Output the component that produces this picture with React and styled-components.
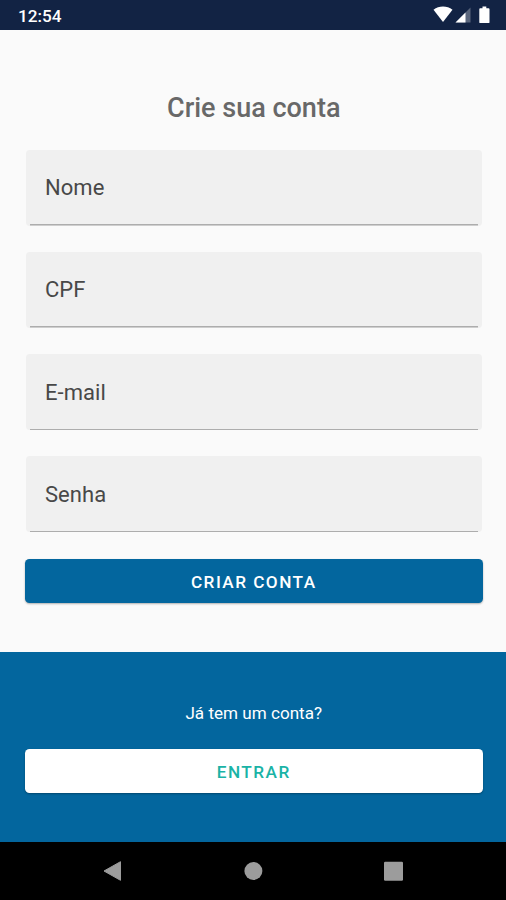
import React, { useState } from "react";
import styled, { createGlobalStyle } from "styled-components";

const GlobalStyle = createGlobalStyle`
  * {
    box-sizing: border-box;
  }
  body {
    margin: 0;
    font-family: Roboto, sans-serif;
  }
`;

const Screen = styled.div`
  display: flex;
  flex-direction: column;
  height: 100vh;
  background: #fafafa;
`;

const StatusBar = styled.header`
  display: flex;
  justify-content: space-between;
  height: 29.5px;
  flex-shrink: 0;
  padding: 0 13px 0 18px;
  color: #fff;
  background: #122344;
`;

const Clock = styled.span`
  font-size: 17.2px;
  font-weight: 500;
  line-height: 32px;
`;

const Form = styled.form`
  display: flex;
  flex-direction: column;
  flex: 1;
  padding: 62px 23.5px 0 25px;
`;

const Title = styled.h1`
  margin: 0 0 26px;
  font-size: 27px;
  font-weight: 500;
  line-height: 32px;
  color: #686868;
  text-align: center;
`;

const Field = styled.label`
  display: flex;
  align-items: center;
  height: 76px;
  margin: 0 0.5px 26.3px 1px;
  padding: 0 19px;
  border-radius: 4px;
  background: linear-gradient(#adadad, #adadad) center 74.5px / calc(100% - 8px)
      1.5px no-repeat,
    #f0f0f0;
`;

const Label = styled.span`
  font-size: 22px;
  letter-spacing: 0.05px;
  color: #484848;
`;

const Input = styled.input`
  flex: 1;
  min-width: 0;
  margin-left: 8px;
  border: none;
  outline: none;
  font: inherit;
  font-size: 21px;
  background: transparent;
`;

const Button = styled.button`
  width: 100%;
  height: 44px;
  flex-shrink: 0;
  padding: 2px 0 0;
  border: none;
  border-radius: 4.5px;
  font-family: inherit;
  font-size: 17.2px;
  font-weight: 500;
  letter-spacing: 1.45px;
  text-transform: uppercase;
  cursor: pointer;
  color: ${({ $light }) => ($light ? "#1ab3a6" : "#fff")};
  background: ${({ $light }) => ($light ? "#fff" : "#03669e")};
  box-shadow: 0 1px 2px rgba(0, 0, 0, 0.3);
`;

const Footer = styled.footer`
  display: flex;
  flex-direction: column;
  align-items: center;
  height: 189.5px;
  flex-shrink: 0;
  padding: 49px 23.5px 0 25px;
  color: #fff;
  background: #03669e;
`;

const Question = styled.p`
  margin: 0 0 24px;
  font-size: 17.1px;
  line-height: 24px;
`;

const NavBar = styled.nav`
  height: 58.4px;
  flex-shrink: 0;
  background: #000;
`;

const fields = [
  { name: "nome", label: "Nome", type: "text" },
  { name: "cpf", label: "CPF", type: "text" },
  { name: "email", label: "E-mail", type: "email" },
  { name: "senha", label: "Senha", type: "password" },
];

const StatusIcons = () => (
  <svg width="60" height="29" viewBox="0 0 60 29" fill="#fff">
    <path d="M.5 9.8C3.4 7.600 6.500 6.600 10 6.600s6.600 1 9.500 3.200L10 22z" />
    <path d="M22.500 22.500 37.500 7.500v15z" opacity=".3" />
    <path d="M22.500 22.500 32.500 12.500v10z" />
    <path d="M47.200 8.300h2.300V6.600h3.800v1.700h2.300q.9 0 .9.900v13q0 .9-.9.900h-8.400q-.9 0-.9-.9v-13q0-.9.900-.9z" />
  </svg>
);

const NavIcons = () => (
  <svg width="506" height="58" viewBox="0 0 506 58" fill="#9c9c9c">
    <path
      d="M104 29 120.500 19.700v18.600z"
      stroke="#9c9c9c"
      strokeWidth="1"
      strokeLinejoin="round"
    />
    <circle cx="253.400" cy="29" r="9" />
    <rect x="384" y="19.700" width="19" height="19" rx="1.200" />
  </svg>
);

const App = () => {
  const [values, setValues] = useState({});

  return (
    <Screen>
      <GlobalStyle />
      <StatusBar>
        <Clock>12:54</Clock>
        <StatusIcons />
      </StatusBar>

      <Form onSubmit={(event) => event.preventDefault()}>
        <Title>Crie sua conta</Title>

        {fields.map(({ name, label, type }) => (
          <Field key={name}>
            <Label>{label}</Label>
            <Input
              name={name}
              type={type}
              value={values[name] || ""}
              onChange={(event) =>
                setValues({ ...values, [name]: event.target.value })
              }
            />
          </Field>
        ))}

        <Button type="submit">Criar conta</Button>
      </Form>

      <Footer>
        <Question>Já tem um conta?</Question>
        <Button type="button" $light>
          Entrar
        </Button>
      </Footer>

      <NavBar>
        <NavIcons />
      </NavBar>
    </Screen>
  );
};

export default App;
